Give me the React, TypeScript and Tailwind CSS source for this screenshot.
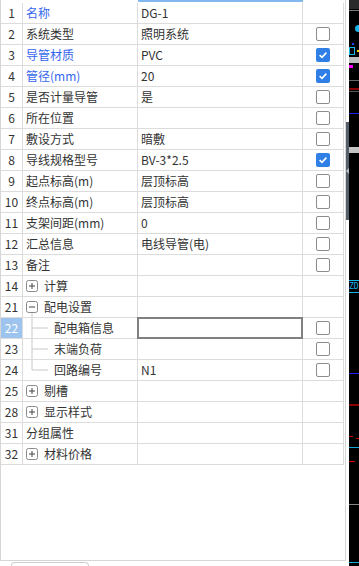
import React from "react";

type Row = {
  no: string;
  name: string;
  value?: string;
  blue?: boolean;
  check?: boolean;
  tree?: "plus" | "minus" | "mid" | "last";
  selected?: boolean;
};

const rows: Row[] = [
  { no: "1", name: "名称", value: "DG-1", blue: true },
  { no: "2", name: "系统类型", value: "照明系统", check: false },
  { no: "3", name: "导管材质", value: "PVC", blue: true, check: true },
  { no: "4", name: "管径(mm)", value: "20", blue: true, check: true },
  { no: "5", name: "是否计量导管", value: "是", check: false },
  { no: "6", name: "所在位置", check: false },
  { no: "7", name: "敷设方式", value: "暗敷", check: false },
  { no: "8", name: "导线规格型号", value: "BV-3*2.5", check: true },
  { no: "9", name: "起点标高(m)", value: "层顶标高", check: false },
  { no: "10", name: "终点标高(m)", value: "层顶标高", check: false },
  { no: "11", name: "支架间距(mm)", value: "0", check: false },
  { no: "12", name: "汇总信息", value: "电线导管(电)", check: false },
  { no: "13", name: "备注", check: false },
  { no: "14", name: "计算", tree: "plus" },
  { no: "21", name: "配电设置", tree: "minus" },
  { no: "22", name: "配电箱信息", tree: "mid", check: false, selected: true },
  { no: "23", name: "末端负荷", tree: "mid", check: false },
  { no: "24", name: "回路编号", value: "N1", tree: "last", check: false },
  { no: "25", name: "剔槽", tree: "plus" },
  { no: "28", name: "显示样式", tree: "plus" },
  { no: "31", name: "分组属性" },
  { no: "32", name: "材料价格", tree: "plus" },
];

const CheckBox = ({ checked }: { checked: boolean }) =>
  checked ? (
    <div className="flex h-[14px] w-[14px] items-center justify-center rounded-[2px] bg-[#2f7fe6]">
      <svg width="10" height="10" viewBox="0 0 10 10">
        <path d="M1.6 5.2 L4 7.4 L8.4 2.6" fill="none" stroke="#fff" strokeWidth="1.6" />
      </svg>
    </div>
  ) : (
    <div className="h-[14px] w-[14px] rounded-[2px] border border-[#8c8c8c] bg-white" />
  );

const TreeMark = ({ kind }: { kind: NonNullable<Row["tree"]> }) => {
  if (kind === "plus" || kind === "minus") {
    return (
      <svg width="18" height="20" viewBox="0 0 18 20" className="shrink-0">
        <rect x="0.5" y="4.5" width="11" height="11" rx="2" fill="#fff" stroke="#8a8a8a" />
        <path d="M3 10 H9" stroke="#444" strokeWidth="1" />
        {kind === "plus" && <path d="M6 7 V13" stroke="#444" strokeWidth="1" />}
        {kind === "minus" && <path d="M6 16 V20" stroke="#c8c8c8" strokeWidth="1" />}
      </svg>
    );
  }
  return (
    <svg width="28" height="20" viewBox="0 0 28 20" className="shrink-0">
      <path d={kind === "last" ? "M6 0 V10" : "M6 0 V20"} stroke="#c8c8c8" strokeWidth="1" />
      <path d="M6 10 H22" stroke="#c8c8c8" strokeWidth="1" />
    </svg>
  );
};

const PropRow = ({ row }: { row: Row }) => (
  <div className="flex h-[21px] border-b border-[#dcdcdc]">
    <div
      className={`flex w-[22px] items-center justify-center border-r border-[#dcdcdc] ${
        row.selected ? "bg-[#9cc4ef] text-white" : "text-[#333]"
      }`}
    >
      {row.no}
    </div>
    <div
      className={`flex w-[115px] items-center border-r border-[#dcdcdc] pl-[3px] ${
        row.blue ? "text-[#3566ee]" : "text-[#333]"
      }`}
    >
      {row.tree && <TreeMark kind={row.tree} />}
      <span className="whitespace-nowrap">{row.name}</span>
    </div>
    <div className="relative flex w-[165px] items-center border-r border-[#dcdcdc] pl-[3px] text-[#333]">
      {row.value}
      {/* edit box of the focused cell sits over the grid lines */}
      {row.selected && (
        <div className="absolute -top-px -left-px h-[22px] w-[166px] border-2 border-[#7f7f7f]" />
      )}
    </div>
    <div className="flex w-[41px] items-center justify-center border-r border-[#dcdcdc]">
      {row.check !== undefined && <CheckBox checked={row.check} />}
    </div>
  </div>
);

// sliver of the CAD drawing next to the panel
const Canvas = () => (
  <div className="flex flex-1 flex-col overflow-hidden bg-black">
    <div className="h-[9px] bg-[#2a2a2a]" />
    <div className="mt-px h-px bg-[#777]" />
    <div className="mt-[14px] ml-[6px] h-[7px] w-[5px] rounded-l-full bg-[#17b6ea]" />
    <div className="mt-[11px] ml-[3px] h-[2px] w-[2px] bg-[#2244ff]" />
    <div className="mt-[2px] flex h-[8px] items-center gap-[2px]">
      <div className="h-[8px] w-[6px] border border-[#17b6ea]" />
      <div className="h-[2px] w-[2px] bg-[#e8e000]" />
    </div>
    <div className="mt-[2px] h-[6px] bg-[#bdbdbd]" />
    <div className="mt-[2px] h-[3px] w-[4px] bg-[#ff00ff]" />
    <div className="mt-[12px] h-px bg-[#666]" />
    <div className="mt-[7px] h-[2px] bg-[#8b0000]" />
    <div className="mt-px h-px bg-[#555]" />
    <div className="mt-[21px] h-px bg-[#2020ff]" />
    <div className="mt-[33px] h-[6px] bg-[#c4c4c4]" />
    <div className="mt-[127px] flex h-[13px] items-center border-y border-[#17b6ea] font-['DejaVu_Sans_Mono',monospace] text-[8px] leading-none text-[#17b6ea]">
      ZD
    </div>
    <div className="mt-[80px] h-px bg-[#2020ff]" />
    <div className="mt-[30px] h-[2px] bg-[#8b0000]" />
    <div className="mt-[30px] flex h-[3px] items-start gap-[3px]">
      <div className="h-px w-[4px] bg-[#cc0000]" />
      <div className="mt-[2px] h-px w-[3px] bg-[#cc0000]" />
    </div>
    <div className="mt-[8px] h-px bg-[#17a8d8]" />
    <div className="mt-[13px] h-px w-[6px] bg-[#dd0000]" />
    <div className="mt-[42px] h-px bg-[#888]" />
    <div className="mt-[57px] h-px bg-[#17a8d8]" />
  </div>
);

export default function App() {
  return (
    <div className="flex h-[566px] w-[359px] overflow-hidden bg-white font-['Noto_Sans_CJK_SC','Noto_Sans',sans-serif] text-[12px] leading-[20px]">
      <div className="flex w-[346px] flex-col">
        <div className="h-[562px] border-x border-b border-[#d6d6d6]">
          <div className="ml-[137px] h-[2px] w-[165px] bg-[#80b8ef]" />
          <div className="w-[343px] pt-px">
            {rows.map((row) => (
              <PropRow key={row.no} row={row} />
            ))}
          </div>
        </div>
        <div className="mt-px ml-[11px] h-[4px] w-[78px] rounded-t-[4px] border-x border-t border-[#cfcfcf]" />
      </div>
      <div className="flex w-[3px] flex-col bg-white">
        <div className="h-[122px]" />
        <div className="flex h-[98px] items-center justify-center bg-[#56606b]">
          <svg width="3" height="6" viewBox="0 0 3 6">
            <path d="M3 0 L0 3 L3 6 Z" fill="#b8bec4" />
          </svg>
        </div>
      </div>
      <Canvas />
    </div>
  );
}
